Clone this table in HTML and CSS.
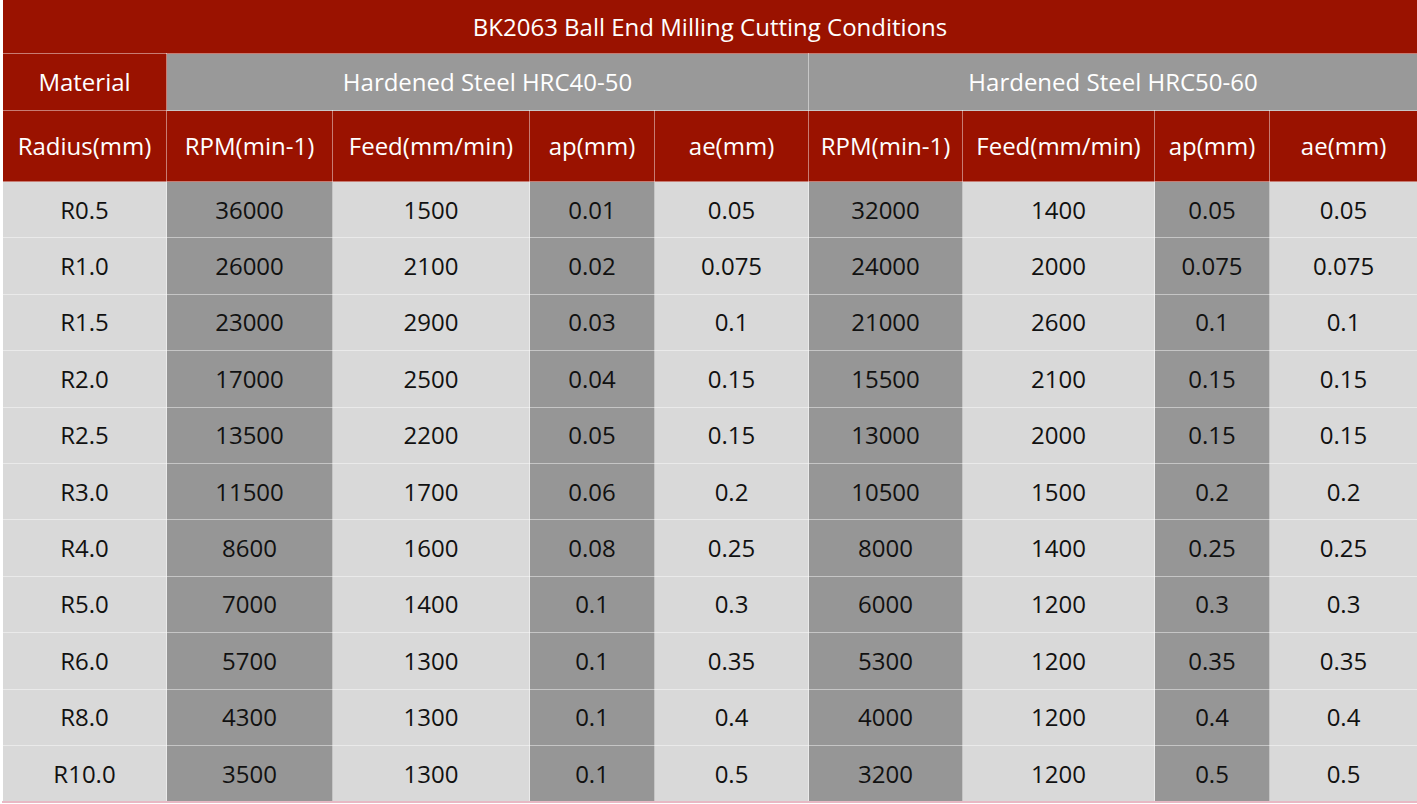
FILE: index.html
```html
<!DOCTYPE html>
<html>
<head>
<meta charset="utf-8">
<link rel="stylesheet" href="styles.css">
</head>
<body>
<table class="cut">
<colgroup>
<col class="c1"><col class="c2"><col class="c3"><col class="c4"><col class="c5"><col class="c6"><col class="c7"><col class="c8"><col class="c9">
</colgroup>
<thead>
<tr class="title"><th colspan="9">BK2063 Ball End Milling Cutting Conditions</th></tr>
<tr class="mat"><th class="red">Material</th><th colspan="4" class="grey">Hardened Steel HRC40-50</th><th colspan="4" class="grey">Hardened Steel HRC50-60</th></tr>
<tr class="head"><th>Radius(mm)</th><th>RPM(min-1)</th><th>Feed(mm/min)</th><th>ap(mm)</th><th>ae(mm)</th><th>RPM(min-1)</th><th>Feed(mm/min)</th><th>ap(mm)</th><th>ae(mm)</th></tr>
</thead>
<tbody>
<tr><td>R0.5</td><td class="d">36000</td><td>1500</td><td class="d">0.01</td><td>0.05</td><td class="d">32000</td><td>1400</td><td class="d">0.05</td><td>0.05</td></tr>
<tr><td>R1.0</td><td class="d">26000</td><td>2100</td><td class="d">0.02</td><td>0.075</td><td class="d">24000</td><td>2000</td><td class="d">0.075</td><td>0.075</td></tr>
<tr><td>R1.5</td><td class="d">23000</td><td>2900</td><td class="d">0.03</td><td>0.1</td><td class="d">21000</td><td>2600</td><td class="d">0.1</td><td>0.1</td></tr>
<tr><td>R2.0</td><td class="d">17000</td><td>2500</td><td class="d">0.04</td><td>0.15</td><td class="d">15500</td><td>2100</td><td class="d">0.15</td><td>0.15</td></tr>
<tr><td>R2.5</td><td class="d">13500</td><td>2200</td><td class="d">0.05</td><td>0.15</td><td class="d">13000</td><td>2000</td><td class="d">0.15</td><td>0.15</td></tr>
<tr><td>R3.0</td><td class="d">11500</td><td>1700</td><td class="d">0.06</td><td>0.2</td><td class="d">10500</td><td>1500</td><td class="d">0.2</td><td>0.2</td></tr>
<tr><td>R4.0</td><td class="d">8600</td><td>1600</td><td class="d">0.08</td><td>0.25</td><td class="d">8000</td><td>1400</td><td class="d">0.25</td><td>0.25</td></tr>
<tr><td>R5.0</td><td class="d">7000</td><td>1400</td><td class="d">0.1</td><td>0.3</td><td class="d">6000</td><td>1200</td><td class="d">0.3</td><td>0.3</td></tr>
<tr><td>R6.0</td><td class="d">5700</td><td>1300</td><td class="d">0.1</td><td>0.35</td><td class="d">5300</td><td>1200</td><td class="d">0.35</td><td>0.35</td></tr>
<tr><td>R8.0</td><td class="d">4300</td><td>1300</td><td class="d">0.1</td><td>0.4</td><td class="d">4000</td><td>1200</td><td class="d">0.4</td><td>0.4</td></tr>
<tr><td>R10.0</td><td class="d">3500</td><td>1300</td><td class="d">0.1</td><td>0.5</td><td class="d">3200</td><td>1200</td><td class="d">0.5</td><td>0.5</td></tr>
</tbody>
</table>
</body>
</html>
```
FILE: styles.css
```css
html, body {
  margin: 0;
  padding: 0;
  background: #ffffff;
}
body {
  padding: 0 0 0 2px;
  font-family: "Open Sans", "Noto Sans", sans-serif;
}
.cut {
  border-collapse: collapse;
  table-layout: fixed;
  width: 1415px;
}
.c1 { width: 164px; }
.c2 { width: 166px; }
.c3 { width: 197px; }
.c4 { width: 125px; }
.c5 { width: 154px; }
.c6 { width: 154px; }
.c7 { width: 192px; }
.c8 { width: 115px; }
.c9 { width: 148px; }
.cut th, .cut td {
  padding: 0;
  text-align: center;
  font-weight: 400;
  font-size: 24px;
  line-height: 1;
  border: 1px solid rgba(255, 255, 255, 0.45);
}
.cut th {
  background: #9a1200;
  color: #ffffff;
}
.title th {
  height: 53px;
  border-top: none;
  border-left: none;
  border-right: none;
}
.mat th {
  height: 56px;
}
.mat .grey {
  background: #999999;
}
.head th {
  height: 70px;
}
.cut td {
  background: #d9d9d9;
  color: #111111;
  height: 55.4px;
}
.cut td.d {
  background: #969696;
}
.cut tbody tr:last-child td {
  border-bottom: 2px solid #e9b8c4;
}
```
